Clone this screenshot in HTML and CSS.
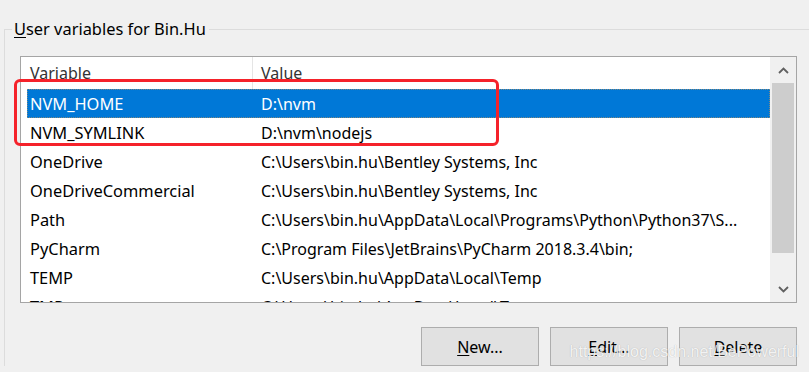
FILE: index.html
```html
<!DOCTYPE html>
<html lang="en">
<head>
    <meta charset="UTF-8">
    <title>Environment Variables</title>
    <link rel="stylesheet" href="styles.css">
</head>
<body>
    <fieldset class="group">
        <legend><u>U</u>ser variables for Bin.Hu</legend>
        <div class="list">
            <div class="list-body">
                <div class="list-head">
                    <div class="col-name">Variable</div>
                    <div class="col-value">Value</div>
                </div>
                <div class="row selected">
                    <span class="col-name">NVM_HOME</span>
                    <span class="col-value">D:\nvm</span>
                </div>
                <div class="row">
                    <span class="col-name">NVM_SYMLINK</span>
                    <span class="col-value">D:\nvm\nodejs</span>
                </div>
                <div class="row">
                    <span class="col-name">OneDrive</span>
                    <span class="col-value">C:\Users\bin.hu\Bentley Systems, Inc</span>
                </div>
                <div class="row">
                    <span class="col-name">OneDriveCommercial</span>
                    <span class="col-value">C:\Users\bin.hu\Bentley Systems, Inc</span>
                </div>
                <div class="row">
                    <span class="col-name">Path</span>
                    <span class="col-value">C:\Users\bin.hu\AppData\Local\Programs\Python\Python37\S...</span>
                </div>
                <div class="row">
                    <span class="col-name">PyCharm</span>
                    <span class="col-value">C:\Program Files\JetBrains\PyCharm 2018.3.4\bin;</span>
                </div>
                <div class="row">
                    <span class="col-name">TEMP</span>
                    <span class="col-value">C:\Users\bin.hu\AppData\Local\Temp</span>
                </div>
                <div class="row">
                    <span class="col-name">TMP</span>
                    <span class="col-value">C:\Users\bin.hu\AppData\Local\Temp</span>
                </div>
            </div>
            <div class="scrollbar">
                <div class="arrow">
                    <svg width="11" height="7" viewBox="0 0 11 7"><polyline points="1,6 5.5,1.5 10,6"/></svg>
                </div>
                <div class="track"><div class="thumb"></div></div>
                <div class="arrow">
                    <svg width="11" height="7" viewBox="0 0 11 7"><polyline points="1,1 5.5,5.5 10,1"/></svg>
                </div>
            </div>
            <div class="mark"></div>
        </div>
        <div class="buttons">
            <button><u>N</u>ew...</button>
            <button><u>E</u>dit...</button>
            <button><u>D</u>elete</button>
        </div>
    </fieldset>
    <div class="watermark">https://blog.csdn.net/BePowerful</div>
</body>
</html>
```

FILE: styles.css
```css
* {
    box-sizing: border-box;
}

html, body {
    margin: 0;
    height: 100%;
    overflow: hidden;
}

body {
    position: relative;
    background: #f0f0f0;
    font-family: "Noto Sans", "Open Sans", sans-serif;
    font-size: 16px;
    color: #000;
}

u {
    text-decoration-thickness: 1px;
    text-underline-offset: 2px;
}

/* group box */
.group {
    width: 900px;
    margin: 19px 0 0 4px;
    padding: 0 0 0 15px;
    border: 1px solid #dcdcdc;
    border-right: none;
    border-bottom: none;
    min-width: 0;
}

.group legend {
    margin-left: -8px;
    padding: 0 3px 0 2px;
    font-size: 16.4px;
    line-height: 20px;
}

/* list view */
.list {
    position: relative;
    display: flex;
    width: 777px;
    height: 247px;
    margin-top: 17px;
    background: #fff;
    border: 1px solid #a5a5a5;
}

.list-body {
    flex: 1;
    overflow: hidden;
}

.list-head {
    display: flex;
    height: 32px;
    line-height: 32px;
    color: #333;
}

.list-head .col-name {
    width: 232px;
    padding-left: 9px;
    border-right: 1px solid #e5e5e5;
}

.list-head .col-value {
    padding-left: 8px;
}

.row {
    display: flex;
    height: 29px;
    padding-top: 1px;
    line-height: 28px;
    margin-left: 6px;
    white-space: nowrap;
}

.row .col-name {
    width: 226px;
    padding-left: 3px;
    font-size: 16.4px;
}

.row .col-value {
    padding-left: 8px;
}

.row.selected {
    background: #0078d7;
    color: #fff;
    outline: 1px dotted rgba(230, 150, 60, 0.55);
    outline-offset: -1px;
}

/* scroll bar */
.scrollbar {
    display: flex;
    flex-direction: column;
    width: 26px;
    background: #f0f0f0;
}

.arrow {
    display: flex;
    align-items: center;
    justify-content: center;
    height: 26px;
}

.arrow:last-child {
    height: 25px;
}

.arrow polyline {
    fill: none;
    stroke: #606060;
    stroke-width: 1.8;
}

.track {
    flex: 1;
    padding: 0 2px;
}

.thumb {
    height: 170px;
    background: #cdcdcd;
}

/* red annotation */
.mark {
    position: absolute;
    left: -7px;
    top: 22px;
    width: 485px;
    height: 67px;
    border: 3px solid #f5222a;
    border-radius: 6px;
}

/* buttons */
.buttons {
    display: flex;
    justify-content: flex-end;
    gap: 11px;
    width: 777px;
    margin-top: 24px;
}

.buttons button {
    width: 118px;
    height: 39px;
    padding: 0;
    background: #e1e1e1;
    border: 1px solid #adadad;
    font-family: inherit;
    font-size: 16px;
    color: #000;
}

.watermark {
    position: absolute;
    right: 10px;
    top: 342px;
    font-family: "Liberation Sans", Arial, sans-serif;
    font-size: 16px;
    line-height: 20px;
    color: rgba(255, 255, 255, 0.85);
    text-shadow: 0 0 1px rgba(0, 0, 0, 0.25);
}
```
